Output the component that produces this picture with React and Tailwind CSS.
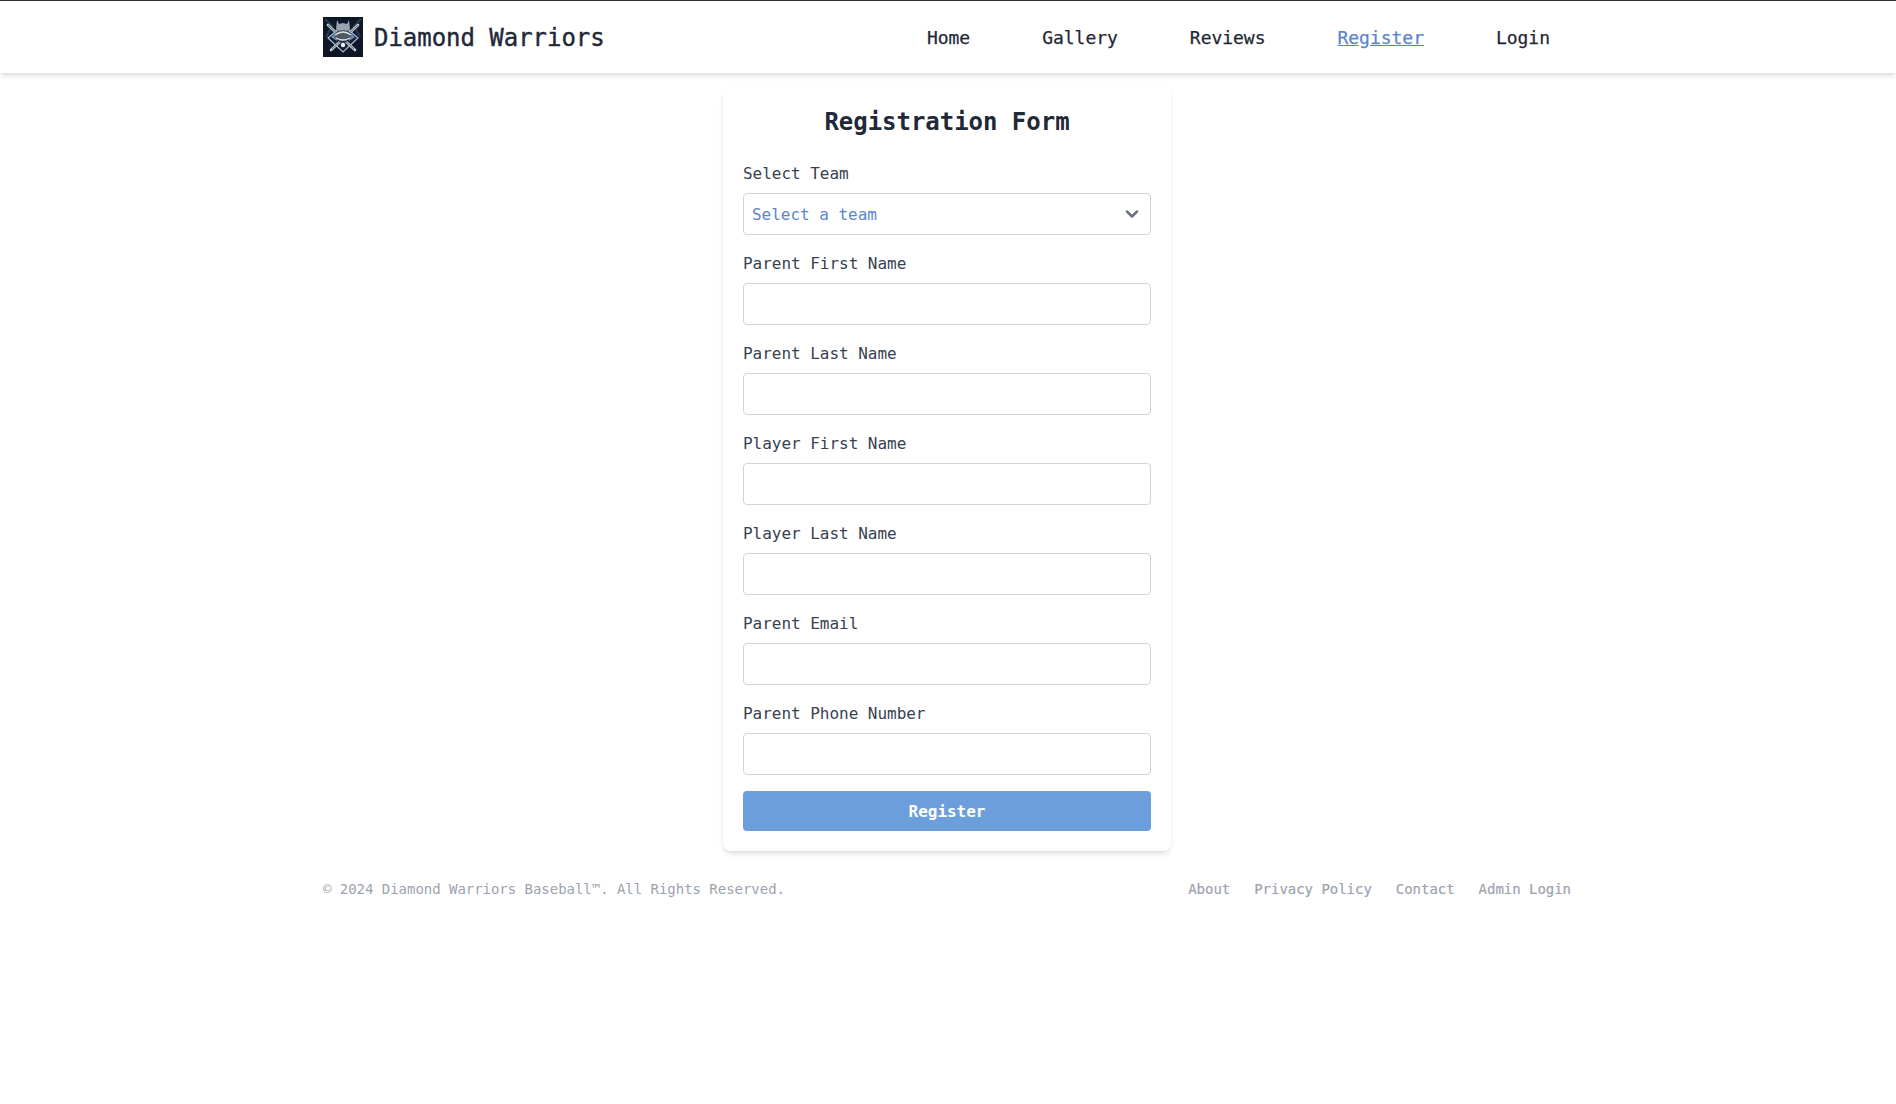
import React from 'react';
import { ChevronDown } from 'lucide-react';

const fields = [
  'Parent First Name',
  'Parent Last Name',
  'Player First Name',
  'Player Last Name',
  'Parent Email',
  'Parent Phone Number',
];

const Logo = () => (
  <svg viewBox="0 0 40 40" className="w-10 h-10 shrink-0">
    <rect width="40" height="40" fill="#0d1728" />
    <path d="M2 2 L9 9 L3 20 M38 2 L31 9 L37 20" stroke="#26364c" strokeWidth="2.4" fill="none" />
    {/* diamond */}
    <path d="M20 8 L35 21 L20 35 L5 21 Z" fill="#131f33" stroke="#a9bcd9" strokeWidth="1.2" />
    <path d="M8 20 L14 14 L14 24 Z M32 20 L26 14 L26 24 Z" fill="#6f8db8" />
    {/* crossed bats */}
    <path d="M5 8 L32 33" stroke="#c9ced6" strokeWidth="2.6" strokeLinecap="round" />
    <path d="M35 8 L8 33" stroke="#c9ced6" strokeWidth="2.6" strokeLinecap="round" />
    <path d="M5 8 L31 32 M35 8 L9 32" stroke="#39424f" strokeWidth="0.8" />
    {/* helmet */}
    <path d="M14 3 L16 7 L20 6 L24 7 L26 3 L27 12 L24 14 L16 14 L13 12 Z" fill="#9aa2ae" />
    <ellipse cx="20" cy="18.5" rx="8.5" ry="5.5" fill="#4f5763" />
    <path d="M12 18 Q20 12 28 18 M13 21 Q20 25 27 21" stroke="#dde0e5" strokeWidth="1.4" fill="none" />
    <path d="M15 24 L25 24 L20 27 Z" fill="#2b3442" />
    <circle cx="20" cy="28" r="2.2" fill="#eef0f3" />
  </svg>
);

const Field = ({ label }) => (
  <div className="mb-4">
    <label className="block pt-px mb-[7px] text-base text-[#374151]">{label}</label>
    <input type="text" className="block w-full h-[42px] px-2 bg-white border border-[#d1d5db] rounded" />
  </div>
);

export default function App() {
  return (
    <div className="min-h-screen bg-white tracking-[-0.03px] font-['DejaVu_Sans_Mono',monospace]">
      <nav className="h-[73px] pr-[2px] bg-white border-t border-[#333333] shadow-md">
        <div className="max-w-7xl mx-auto px-4 h-full flex items-center justify-between">
          <div className="flex items-center gap-[11px]">
            <Logo />
            <span className="pt-[2px] text-2xl text-[#1f2937] [-webkit-text-stroke:0.4px]">Diamond Warriors</span>
          </div>
          <div className="flex items-center gap-[72px] pt-[2px] pr-[21px] text-lg text-[#1f2937] [-webkit-text-stroke:0.25px]">
            <a href="#">Home</a>
            <a href="#">Gallery</a>
            <a href="#">Reviews</a>
            <a href="#" className="text-[#5b85cf] underline">Register</a>
            <a href="#">Login</a>
          </div>
        </div>
      </nav>

      <main className="pt-[14px] pr-[2px]">
        <form className="w-[448px] mx-auto p-5 bg-white rounded-lg shadow-md">
          <h1 className="mb-6 text-2xl leading-[30px] font-bold text-center text-[#1f2937]">Registration Form</h1>
          <div className="mb-4">
            <label className="block pt-px mb-[7px] text-base text-[#374151]">Select Team</label>
            <div className="relative">
              <select className="block w-full h-[42px] px-2 pt-px appearance-none bg-white border border-[#d1d5db] rounded text-base text-[#5b85cf]">
                <option>Select a team</option>
              </select>
              <ChevronDown className="absolute right-[9px] top-[11px] w-5 h-5 text-[#6b7280]" strokeWidth={3} />
            </div>
          </div>
          {fields.map((label) => (
            <Field key={label} label={label} />
          ))}
          <button type="button" className="block w-full h-10 pt-px bg-[#6c9edb] rounded text-base font-bold text-white">
            Register
          </button>
        </form>
      </main>

      <div className="pr-[2px]">
        <footer className="max-w-7xl mx-auto px-4 mt-[28px] flex items-center justify-between text-sm text-[#9ca3af]">
          <span>© 2024 Diamond Warriors Baseball™. All Rights Reserved.</span>
          <div className="flex gap-6 [-webkit-text-stroke:0.2px]">
            <a href="#">About</a>
            <a href="#">Privacy Policy</a>
            <a href="#">Contact</a>
            <a href="#">Admin Login</a>
          </div>
        </footer>
      </div>
    </div>
  );
}
